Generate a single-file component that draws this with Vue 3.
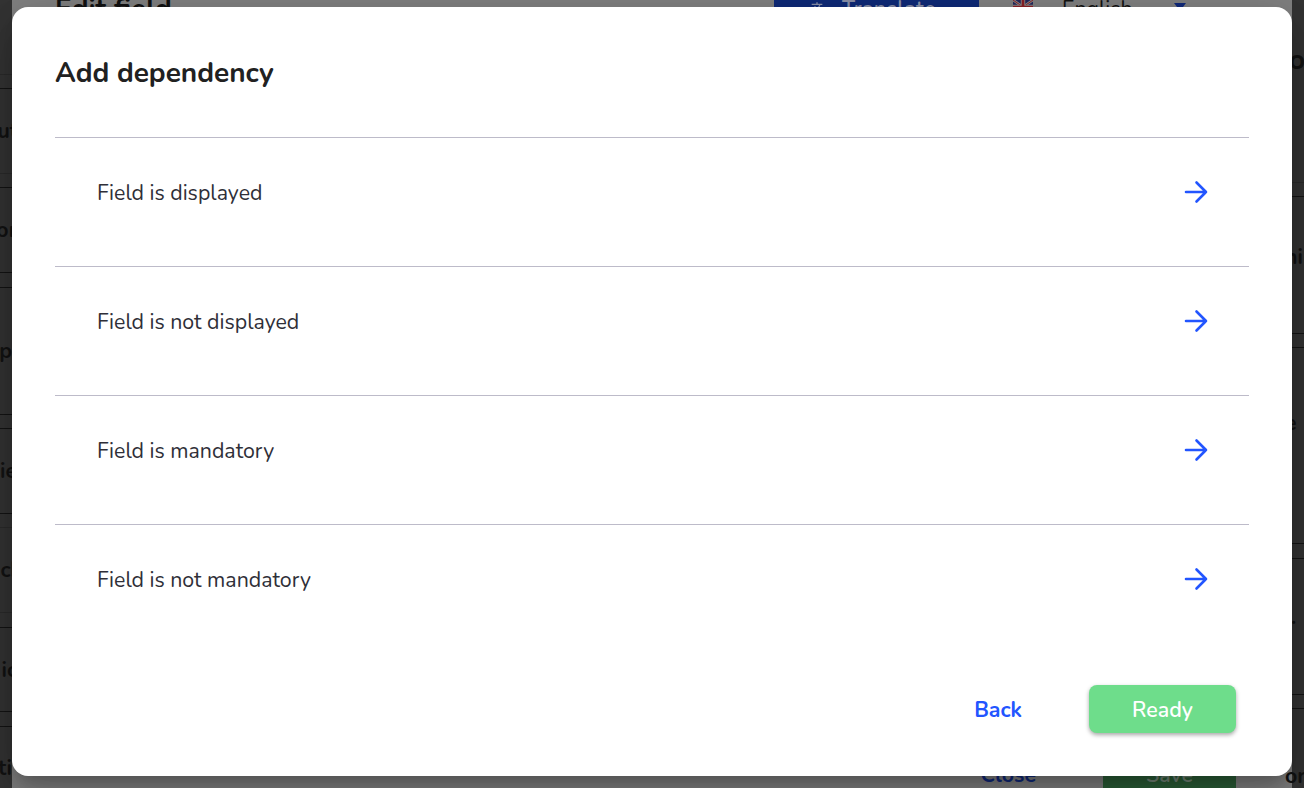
<script setup>
const options = ['Field is displayed', 'Field is not displayed', 'Field is mandatory', 'Field is not mandatory']
const leftRows = [
  { text: '', h: 75, gap: 0, shift: 0, softBottom: true, noTop: true },
  { text: 'ut', h: 86, gap: 13, shift: 6, softBottom: true },
  { text: 'or', h: 86, gap: 13, shift: 5 },
  { text: 'up', h: 128, gap: 14, shift: 0 },
  { text: 'ie', h: 86, gap: 13, shift: 5 },
  { text: 'ch', h: 86, gap: 13, shift: 11, softTop: true, softBottom: true },
  { text: 'ic', h: 85, gap: 14, shift: 5 },
  { text: 'ti', h: 84, gap: 14, shift: 0 }
]
const rightRows = [
  { text: 'o', h: 183, gap: 0, pad: 46, indent: -3, size: 28, softBottom: true, noTop: true },
  { text: 'hi', h: 138, gap: 13, pad: 46, indent: -7, size: 21.33 },
  { text: 'e', h: 197, gap: 13, pad: 61, indent: -7, size: 21.33 },
  { text: '.', h: 137, gap: 14, pad: 44, indent: -1, size: 21.33 },
  { text: 'or', h: 130, gap: 13, pad: 53, indent: -7, size: 21.33 }
]
</script>

<template>
  <div class="page">
    <div class="backdrop">
      <div class="side side-left">
        <div
          v-for="(r, i) in leftRows"
          :key="i"
          class="side-row"
          :class="{ 'soft-top': r.softTop, 'soft-bottom': r.softBottom, 'no-top': r.noTop }"
          :style="{ height: r.h + 'px', marginTop: r.gap + 'px', marginRight: -r.shift + 'px' }"
        >{{ r.text }}</div>
      </div>
      <div class="under">
        <div class="under-top">
          <span class="under-title">Edit field</span>
          <span class="under-translate">
            <svg width="16" height="16" viewBox="0 0 24 24" fill="#8a90a8">
              <path d="M12.87 15.07l-2.54-2.51.03-.03c1.74-1.94 2.98-4.17 3.71-6.53H17V4h-7V2H8v2H1v1.99h11.17C11.5 7.92 10.44 9.75 9 11.35 8.07 10.32 7.3 9.19 6.69 8h-2c.73 1.63 1.73 3.17 2.98 4.56l-5.09 5.02L4 19l5-5 3.11 3.11.76-2.04zM18.5 10h-2L12 22h2l1.12-3h4.75L21 22h2l-4.5-12zm-2.62 7l1.62-4.33L19.12 17h-3.24z" />
            </svg>
            <span>Translate</span>
          </span>
          <svg class="under-flag" width="20" height="14" viewBox="0 0 20 14">
            <rect width="20" height="14" fill="#23285c" />
            <path d="M0 0l20 14M20 0L0 14" stroke="#8a8a8a" stroke-width="2.6" />
            <path d="M0 0l20 14M20 0L0 14" stroke="#8a2026" stroke-width="1" />
            <path d="M10 0v14M0 7h20" stroke="#8a8a8a" stroke-width="4.4" />
            <path d="M10 0v14M0 7h20" stroke="#8a2026" stroke-width="2.6" />
          </svg>
          <span class="under-lang">English</span>
          <svg class="under-caret" width="14" height="8" viewBox="0 0 14 8">
            <path d="M1 0h12L7 8z" fill="#10297a" />
          </svg>
        </div>
        <div class="under-bottom">
          <span class="under-close">Close</span>
          <span class="under-save">Save</span>
        </div>
      </div>
      <div class="side side-right">
        <div
          v-for="(r, i) in rightRows"
          :key="i"
          class="side-row"
          :class="{ 'soft-bottom': r.softBottom, 'no-top': r.noTop }"
          :style="{ height: r.h + 'px', marginTop: r.gap + 'px', paddingTop: r.pad + 'px', textIndent: r.indent + 'px', fontSize: r.size + 'px' }"
        >{{ r.text }}</div>
      </div>
    </div>
    <section class="modal">
      <h2 class="title">Add dependency</h2>
      <ul class="list">
        <li v-for="o in options" :key="o" class="item">
          <span class="item-label">{{ o }}</span>
          <svg class="arrow" width="24" height="24" viewBox="0 0 24 24" fill="none" stroke="#2255ff" stroke-width="2.6" stroke-linecap="round" stroke-linejoin="round">
            <path d="M2 12h20M12.500 2.500L22 12l-9.500 9.500" />
          </svg>
        </li>
      </ul>
      <div class="actions">
        <button class="back">Back</button>
        <button class="ready">Ready</button>
      </div>
    </section>
  </div>
</template>

<style>
html, body { margin: 0; background: #333; }
</style>

<style scoped>
.page {
  position: relative;
  width: 1304px;
  height: 788px;
  overflow: hidden;
  font-family: "Nunito", "Lato", "Noto Sans", sans-serif;
  background: #333;
}
.backdrop { display: flex; height: 100%; }
.side {
  width: 12px;
  flex: none;
  background: #333;
  color: #121212;
  font-weight: 700;
  font-size: 21.33px;
  line-height: 28px;
  white-space: nowrap;
}
.side-row {
  box-sizing: border-box;
  border-top: 1px solid #141414;
  border-bottom: 1px solid #141414;
  display: flex;
  align-items: center;
}
.side-left .side-row { justify-content: flex-end; }
.side-right .side-row { display: block; }
.soft-top { border-top-color: #2a2a2a; }
.soft-bottom { border-bottom-color: #2a2a2a; }
.no-top { border-top: 0; }
.under {
  flex: 1;
  min-width: 0;
  display: flex;
  flex-direction: column;
  justify-content: space-between;
  background: #808080;
  color: #111;
}
.under-top {
  height: 40px;
  margin-top: -11px;
  padding: 0 105px 0 43px;
  display: flex;
  align-items: center;
}
.under-title { font-size: 28px; font-weight: 700; margin-right: auto; }
.under-translate {
  width: 205px;
  height: 40px;
  box-sizing: border-box;
  padding-right: 6px;
  margin-right: 34px;
  display: flex;
  align-items: center;
  justify-content: center;
  gap: 15px;
  background: #0f2a78;
  color: #8a90a8;
  font-size: 21.33px;
  font-weight: 600;
  letter-spacing: .4px;
}
.under-flag { flex: none; margin: 0 29px 4px 0; }
.under-lang { font-size: 21.33px; width: 69px; margin-right: 42px; }
.under-caret { flex: none; margin-bottom: 4px; }
.under-bottom {
  height: 48px;
  margin-bottom: -11px;
  padding-right: 56px;
  display: flex;
  justify-content: flex-end;
  align-items: center;
  gap: 67px;
  font-size: 21.33px;
  font-weight: 700;
}
.under-close { color: #10297a; }
.under-save {
  width: 133px;
  height: 48px;
  display: flex;
  align-items: center;
  justify-content: center;
  background: #2b5e37;
  color: #748578;
  font-weight: 600;
}
.modal {
  position: absolute;
  left: 12px;
  top: 7px;
  width: 1280px;
  height: 769px;
  box-sizing: border-box;
  padding: 0 43px;
  background: #fff;
  border-radius: 16px;
  box-shadow: 0 11px 15px -7px rgba(0,0,0,.2), 0 24px 38px 3px rgba(0,0,0,.14), 0 9px 46px 8px rgba(0,0,0,.12);
  display: flex;
  flex-direction: column;
}
.title {
  margin: 0;
  height: 130px;
  padding-top: 48px;
  box-sizing: border-box;
  font-size: 28px;
  line-height: 36px;
  font-weight: 700;
  color: #212121;
}
.list { list-style: none; margin: 0; padding: 0; }
.item {
  height: 129px;
  box-sizing: border-box;
  border-top: 1px solid #bdbbc9;
  padding: 0 41px 20px 42px;
  display: flex;
  align-items: center;
  justify-content: space-between;
  font-size: 21.33px;
  color: #2f2f38;
}
.item-label { margin-top: 1px; }
.arrow { display: block; }
.actions {
  margin-top: 32px;
  display: flex;
  justify-content: flex-end;
  align-items: center;
  padding-right: 13px;
  gap: 67px;
}
.back, .ready { border: 0; font: inherit; font-size: 21.33px; padding: 2px 0 0; }
.back { background: none; color: #2255ff; font-weight: 700; }
.ready {
  width: 147px;
  height: 48px;
  border-radius: 8px;
  background: #6edd8b;
  color: #fff;
  font-weight: 600;
  box-shadow: 0 2px 4px rgba(0,0,0,.35);
}
</style>
